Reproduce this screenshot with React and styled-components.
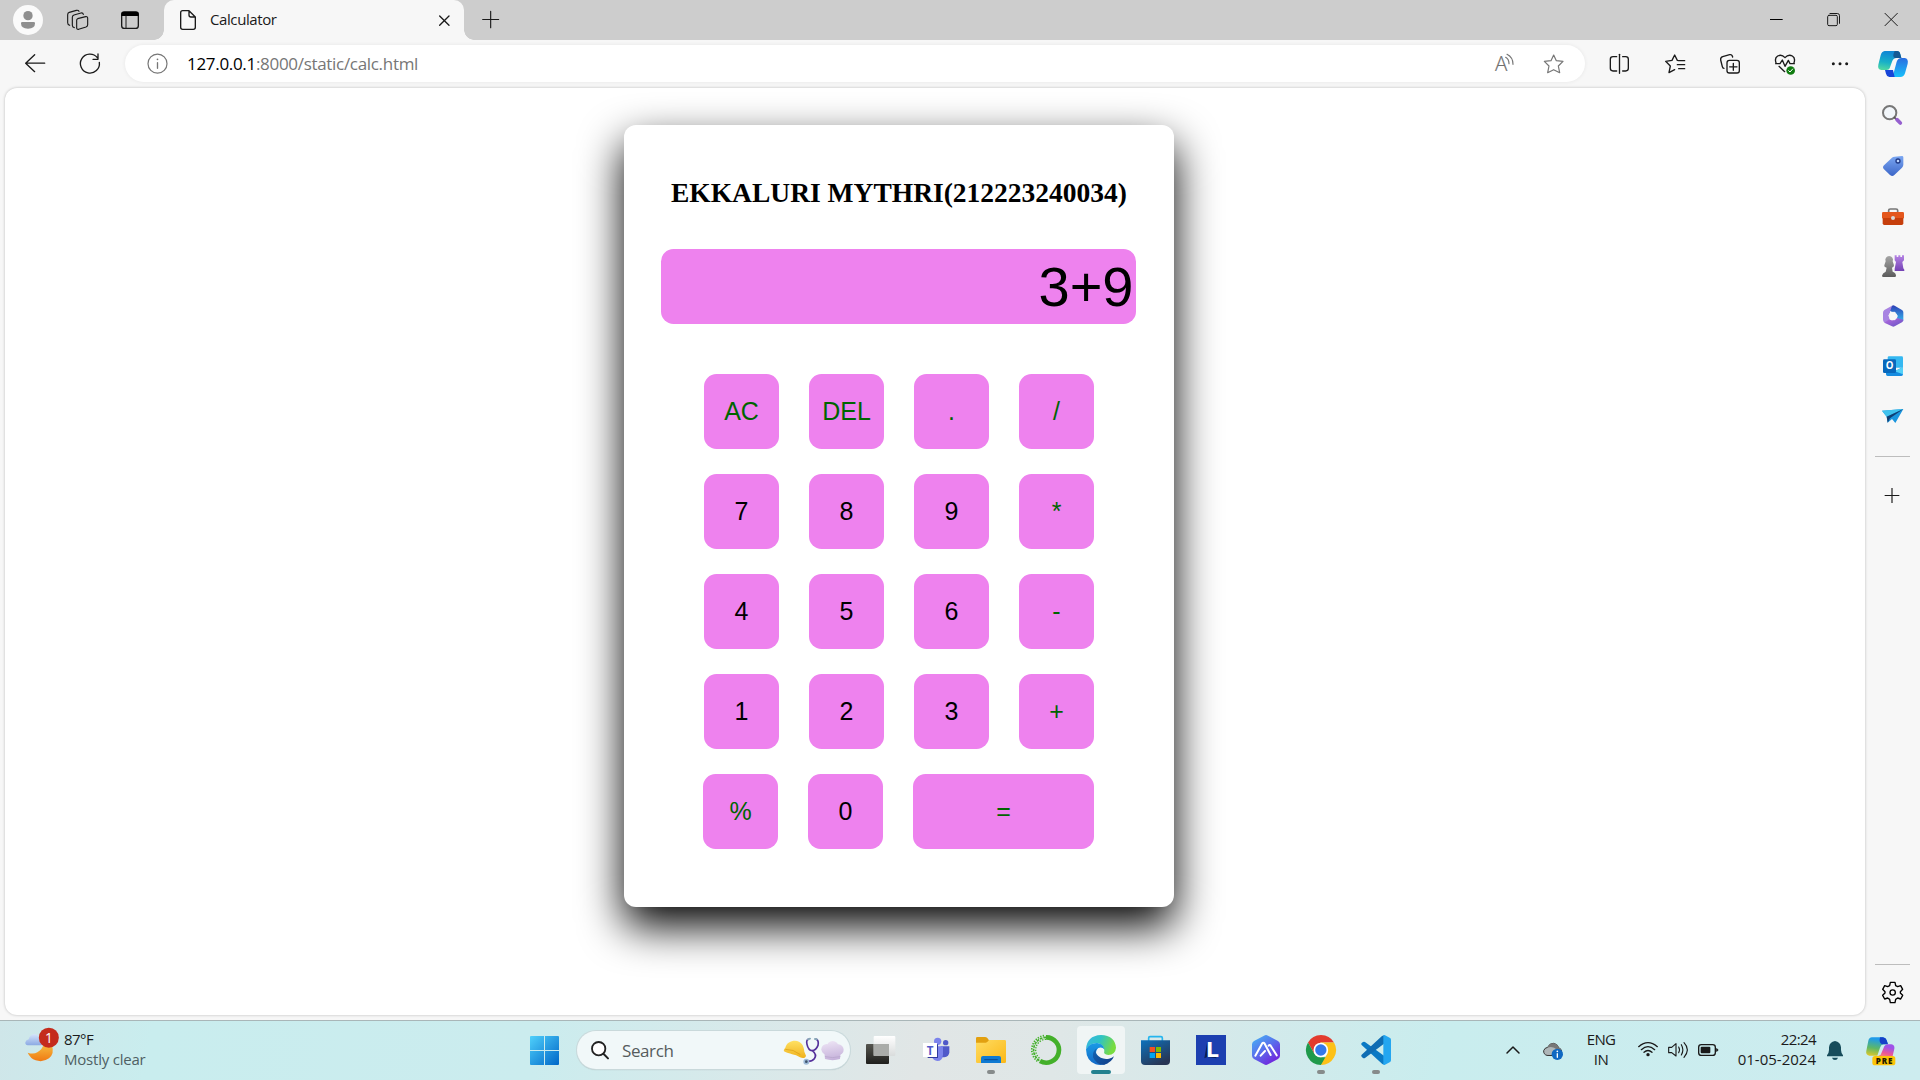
import React from "react";
import styled, { createGlobalStyle, css } from "styled-components";

const GlobalStyle = createGlobalStyle`
  * { box-sizing: border-box; }
  html, body { margin: 0; padding: 0; overflow: hidden; }
  body { font-family: "Open Sans", "Noto Sans", sans-serif; color: #1b1b1b; }
`;

const Screen = styled.div`
  width: 1920px;
  height: 1080px;
  display: flex;
  flex-direction: column;
  background: #f7f7f7;
  overflow: hidden;
`;

/* ---------- icons: artwork is drawn on a grid of three units per pixel ---------- */

const Svg = styled.svg`
  display: block;
  flex: none;
  fill: none;
  stroke-linecap: round;
  stroke-linejoin: round;
`;

const Glyph = ({ box, children, ...rest }) => (
  <Svg viewBox={box.join(" ")} width={box[2] / 3} height={box[3] / 3} {...rest}>
    {children}
  </Svg>
);

/* ---------- tab strip ---------- */

const TabStrip = styled.header`
  display: flex;
  height: 40px;
  flex: none;
  background: #cdcdcd;
`;

const Tab = styled.div`
  position: relative;
  display: flex;
  width: 300px;
  height: 40px;
  background: #f7f7f7;
  border-radius: 10px 10px 0 0;
  &::before, &::after {
    content: "";
    position: absolute;
    bottom: 0;
    width: 10px;
    height: 10px;
  }
  &::before { left: -10px; background: radial-gradient(circle at 0 0, transparent 9.5px, #f7f7f7 10px); }
  &::after { right: -10px; background: radial-gradient(circle at 100% 0, transparent 9.5px, #f7f7f7 10px); }
`;

const TabTitle = styled.span`
  flex: 1;
  font-size: 15px;
  line-height: 39px;
  letter-spacing: -0.4px;
  color: #1a1a1a;
`;

const WindowControls = styled.div`
  display: flex;
  margin-left: auto;
`;

/* ---------- toolbar ---------- */

const Toolbar = styled.div`
  display: flex;
  height: 48px;
  flex: none;
  background: #f7f7f7;
`;

const AddressBar = styled.div`
  display: flex;
  flex: 1;
  height: 37px;
  margin-top: 5px;
  border-radius: 19px;
  background: #fff;
  box-shadow: 0 0 4px rgba(0, 0, 0, 0.07);
`;

const Url = styled.span`
  flex: 1;
  font-size: 17px;
  line-height: 37px;
  letter-spacing: -0.31px;
  color: #767676;
  b { font-weight: 400; color: #000; }
`;

/* ---------- page ---------- */

const Body = styled.div`
  display: flex;
  height: 932px;
  flex: none;
`;

const Viewport = styled.main`
  width: 1860px;
  height: 927px;
  margin: 0 1px 0 5px;
  border-radius: 12px;
  background: #fff;
  box-shadow: 0 0 3px rgba(0, 0, 0, 0.25);
  overflow: hidden;
`;

const Calculator = styled.section`
  display: flex;
  flex-direction: column;
  align-items: flex-start;
  width: 550px;
  height: 782px;
  margin: 37px 0 0 619px;
  border-radius: 12px;
  background: #fff;
  box-shadow: 0 19px 44px #000;
`;

const Title = styled.h2`
  align-self: center;
  margin: 50px 0 0;
  height: 36px;
  font: 700 27.5px/36px "Liberation Serif", "Times New Roman", serif;
  white-space: nowrap;
  color: #000;
`;

const Display = styled.div`
  width: 475px;
  height: 75px;
  margin: 38px 0 0 37px;
  padding-right: 2.5px;
  border-radius: 12.5px;
  background: violet;
  color: #000;
  font: 56px/75px "Liberation Sans", Arial, sans-serif;
  text-align: right;
`;

const Keypad = styled.div`
  display: flex;
  flex-direction: column;
  align-items: flex-end;
  gap: 25px;
  width: 391px;
  margin: 50px 0 0 79px;
`;

const KeyRow = styled.div`
  display: flex;
  gap: 30px;
`;

const Key = styled.button`
  width: ${(p) => (p.$wide ? 181 : 75)}px;
  height: 75px;
  padding: 0;
  border: 0;
  border-radius: 12.5px;
  background: violet;
  color: ${(p) => (p.$operator ? "darkgreen" : "#000")};
  font: 25px/75px "Liberation Sans", Arial, sans-serif;
`;

const KEYS = [
  ["AC", "DEL", ".", "/"],
  ["7", "8", "9", "*"],
  ["4", "5", "6", "-"],
  ["1", "2", "3", "+"],
  ["%", "0", "="],
];

/* ---------- side bar ---------- */

const Sidebar = styled.aside`
  display: flex;
  flex-direction: column;
  width: 54px;
  height: 932px;
`;

const Rule = styled.div`
  width: 35px;
  height: 1px;
  margin: ${(p) => p.$top} 0 0 9px;
  background: #bdbdbd;
`;

/* ---------- task bar ---------- */

const Taskbar = styled.footer`
  display: flex;
  height: 60px;
  flex: none;
  box-shadow: inset 0 1px #a9b6b8;
  background: linear-gradient(100deg, #cfe6e9 0%, #c9edee 8%, #cbecee 28%, #d8e9ea 39%, #e1e6e6 48%, #dfe7e7 55%, #d2eaeb 66%, #c9edee 75%, #cdecef 100%);
`;

const Weather = styled.div`
  display: flex;
  width: 510px;
`;

const Lines = styled.div`
  display: flex;
  flex-direction: column;
  padding-top: 9px;
  width: ${(p) => p.$w};
  text-align: ${(p) => p.$align || "left"};
`;

const Line = styled.span`
  font-size: 15px;
  line-height: 20px;
  white-space: nowrap;
  letter-spacing: ${(p) => p.$track || "0"};
  ${(p) => p.$muted && css`color: #4f6063;`}
`;

const SearchBox = styled.div`
  display: flex;
  width: 273px;
  height: 38px;
  margin: 11px 3px 0 0;
  border-radius: 19px;
  background: #f1f8f9;
  box-shadow: 0 0 0 1px #c9d9db, 0 1px 1px #9fb0b2;
`;

const Placeholder = styled.span`
  flex: 1;
  font-size: 17px;
  line-height: 39px;
  letter-spacing: -0.4px;
  color: #565c5d;
`;

const TaskSlot = styled.div`
  display: flex;
  position: relative;
  width: 55px;
  height: 60px;
  ${(p) => p.$state && css`
    &::after {
      content: "";
      position: absolute;
      bottom: 6px;
      left: ${p.$state === "active" ? 18 : 24}px;
      width: ${p.$state === "active" ? 20 : 8}px;
      height: 4px;
      border-radius: 2px;
      background: ${p.$state === "active" ? "#23818f" : "#868b8b"};
    }
  `}
`;

const Tray = styled.div`
  display: flex;
  margin-left: auto;
`;

/* ---------- artwork ---------- */

const ink = { stroke: "#1a1a1a", strokeWidth: 4 };
const gray = { stroke: "#767676", strokeWidth: 3.6 };

const Grad = ({ id, from, mid, to, x2 = 0, y2 = 1 }) => (
  <linearGradient id={id} x1="0" y1="0" x2={x2} y2={y2}>
    <stop offset="0" stopColor={from} />
    {mid && <stop offset="0.5" stopColor={mid} />}
    <stop offset="1" stopColor={to} />
  </linearGradient>
);

const Star = (p) => (
  <path d="M281 165 L289 182 L309 184 L295 198 L299 218 L281 209 L263 218 L267 198 L253 184 L273 182 Z" {...p} />
);

const Tabs = () => (
  <TabStrip>
    <Glyph box={[0, 0, 159, 120]}>
      <circle cx="84" cy="60" r="45" fill="#fafafa" />
      <circle cx="84" cy="47" r="14" fill="#8f8f8f" />
      <path d="M63 70 Q63 66 67 66 H101 Q105 66 105 70 Q105 86 84 86 Q63 86 63 70 Z" fill="#8f8f8f" />
    </Glyph>
    <Glyph box={[159, 0, 162, 120]}>
      <g {...ink} strokeWidth="3.4">
        <path d="M233 56 L257 50 Q263 49 263 55 V74 Q263 79 258 81 L236 88 Q230 89 230 83 V61 Q230 57 233 56 Z" />
        <path d="M223 83 Q217 82 217 76 V52 Q217 47 222 45 L243 39 Q249 38 250 43" />
        <path d="M209 76 Q203 74 203 68 V44 Q203 39 208 37 L229 31 Q235 30 237 34" />
      </g>
    </Glyph>
    <Glyph box={[321, 0, 171, 120]}>
      <rect x="365" y="36" width="50" height="49" rx="8" {...ink} />
      <path d="M364 48 V42 Q364 35 371 35 H409 Q416 35 416 42 V48 Z" fill="#000" />
      <path d="M378 48 V84" {...ink} strokeWidth="3" />
    </Glyph>
    <Tab>
      <Glyph box={[492, 0, 138, 120]}>
        <path d="M548 32 H567 L586 51 V82 Q586 88 580 88 H548 Q542 88 542 82 V38 Q542 32 548 32 Z M567 32 V45 Q567 51 573 51 H586" {...ink} />
      </Glyph>
      <TabTitle>Calculator</TabTitle>
      <Glyph box={[1290, 0, 102, 120]}>
        <path d="M1319 48 L1347 76 M1347 48 L1319 76" {...ink} />
      </Glyph>
    </Tab>
    <Glyph box={[1392, 0, 168, 120]}>
      <path d="M1448 58.5 H1496 M1472 34 V83" {...ink} strokeWidth="3.4" />
    </Glyph>
    <WindowControls>
      <Glyph box={[864, 0, 171, 120]}>
        <path d="M930 58.5 H968" stroke="#000" strokeWidth="3" strokeLinecap="butt" />
      </Glyph>
      <Glyph box={[1035, 0, 171, 120]}>
        <rect x="1103" y="46" width="29" height="31" rx="4" {...ink} strokeWidth="3" />
        <path d="M1110 40.5 H1132 Q1138.500 40.500 1138.500 47 V70" {...ink} strokeWidth="3" />
      </Glyph>
      <Glyph box={[1206, 0, 174, 120]}>
        <path d="M1275 40 L1312 77 M1312 40 L1275 77" {...ink} strokeWidth="3" />
      </Glyph>
    </WindowControls>
  </TabStrip>
);

const Tools = () => (
  <Toolbar>
    <Glyph box={[0, 120, 171, 144]}>
      <path d="M77 189.500 H134 M104 164 L77 189.500 L104 215" {...ink} />
    </Glyph>
    <Glyph box={[171, 120, 204, 144]}>
      <path d="M298 187 A28.500 28.500 0 1 1 292 173 M294 162 V178 H279" {...ink} />
    </Glyph>
    <AddressBar>
      <Glyph box={[375, 135, 186, 111]}>
        <circle cx="472.500" cy="191" r="28.500" {...gray} />
        <path d="M472.500 188 V205" {...gray} strokeWidth="4" />
        <circle cx="472.500" cy="178" r="2.600" fill="#767676" />
      </Glyph>
      <Url><b>127.0.0.1</b>:8000/static/calc.html</Url>
      <Glyph box={[75, 135, 123, 111]}>
        <text x="105" y="212" fontSize="61" fontWeight="300" fill="#6f6f6f" stroke="#6f6f6f" strokeWidth="0.600" textLength="37" lengthAdjust="spacingAndGlyphs">A</text>
        <path d="M137 172 Q147 178 147 191 M141 163 Q159 172 159 193" {...gray} />
      </Glyph>
      <Glyph box={[198, 135, 177, 111]}>
        <Star {...gray} />
      </Glyph>
    </AddressBar>
    <Glyph box={[375, 120, 186, 144]}>
      <path d="M470 170 H459 Q451 170 451 178 V205 Q451 213 459 213 H470 M488 170 H497 Q505 170 505 178 V205 Q505 213 497 213 H488" {...ink} />
      <path d="M478.500 163 V220" {...ink} />
    </Glyph>
    <Glyph box={[561, 120, 168, 144]}>
      <path d="M656 182 L652 181 L644 165 L636 181 L617 184 L631 198 L627 218 L644 209 M657 182 H674 M652 194 H674 M656 206 H674" {...ink} />
    </Glyph>
    <Glyph box={[729, 120, 165, 144]}>
      <rect x="801" y="181" width="37" height="38" rx="7" {...ink} />
      <path d="M820 190 V211 M809 200.500 H831" {...ink} />
      <path d="M792 205 Q788 205 787 200 L782 180 Q781 172 788 170 L809 164 Q816 162 818 171" {...ink} />
    </Glyph>
    <Glyph box={[894, 120, 162, 144]}>
      <path d="M948 188 Q943 174 953 168 Q965 162 975 173 Q985 162 997 168 Q1007 174 1002 188" {...ink} />
      <path d="M947 191 H960 L967 180 L975 199 L985 181 L990 191 H1003 M957 199 L974 215" {...ink} />
      <circle cx="992" cy="211.500" r="13" fill="#107c10" />
      <path d="M986 212 L990 216 L998 207" stroke="#fff" strokeWidth="3" />
    </Glyph>
    <Glyph box={[1056, 120, 168, 144]}>
      <g fill="#1a1a1a">
        <circle cx="1120" cy="191.500" r="4.500" />
        <circle cx="1140" cy="191.500" r="4.500" />
        <circle cx="1160" cy="191.500" r="4.500" />
      </g>
    </Glyph>
    <Glyph box={[1224, 120, 156, 144]}>
      <defs>
        <Grad id="cpA" from="#1089d4" mid="#18b0c8" to="#5ce19a" x2={-0.2} />
        <Grad id="cpB" from="#2a6de0" to="#18c0fb" />
      </defs>
      <path d="M1274 153 H1310 Q1319 153 1321 163 L1324 174 H1310 Q1299 175 1296 185 L1289 205 Q1287 210 1280 210 H1264 Q1252 208 1255 194 L1262 166 Q1265 154 1274 153 Z" fill="url(#cpA)" />
      <path d="M1304 153 H1311 Q1319 153 1321 163 L1324 174 H1304 Q1296 170 1304 153 Z" fill="#145a94" />
      <path d="M1325 174 H1334 Q1346 176 1343 191 L1335 220 Q1332 231 1321 231 H1288 Q1298 230 1301 219 L1310 185 Q1313 175 1325 174 Z" fill="url(#cpB)" />
      <path d="M1275 210 H1299 L1304 231 H1288 Q1280 230 1278 221 Z" fill="#1745d8" />
    </Glyph>
  </Toolbar>
);

const Side = () => (
  <Sidebar>
    <Glyph box={[18, 24, 162, 156]}>
      <circle cx="89" cy="98" r="20" stroke="#777" strokeWidth="6" fill="#f2f6fa" />
      <path d="M103 112 L110 119" stroke="#555" strokeWidth="5" />
      <path d="M111 119 L121 129" stroke="#9660cf" strokeWidth="11" />
    </Glyph>
    <Glyph box={[18, 180, 162, 156]}>
      <defs><Grad id="tag" from="#7ba7f2" to="#3c66c8" /></defs>
      <path d="M104 230 L126 228 Q130 228 130 232 V254 Q130 259 126 263 L103 285 Q97 291 90 285 L72 268 Q66 262 72 256 L96 233 Q99 230 104 230 Z" fill="url(#tag)" />
      <circle cx="114" cy="243" r="6" fill="#b9d3ff" stroke="#213a86" strokeWidth="4" />
    </Glyph>
    <Glyph box={[18, 336, 162, 150]}>
      <path d="M86 398 V391 Q86 387 91 387 H108 Q113 387 113 391 V398" stroke="#777" strokeWidth="5" />
      <rect x="66" y="396" width="66" height="20" rx="4" fill="#e4571d" />
      <path d="M68 414 H130 V430 Q130 435 125 435 H73 Q68 435 68 430 Z" fill="#c63f0c" />
      <circle cx="99" cy="414" r="6" fill="#d9d9d9" />
    </Glyph>
    <Glyph box={[18, 486, 162, 150]}>
      <defs><Grad id="rook" from="#b583e4" to="#7442b4" /><Grad id="pawn" from="#a5a5a5" to="#5c5c5c" /></defs>
      <path d="M104 526 H110 V531 H115 V526 H121 V531 H126 V526 H132 V541 L127 546 L130 565 Q134 568 133 573 H104 V566 L108 546 L104 541 Z" fill="url(#rook)" />
      <path d="M77 544 A11.500 11.500 0 1 1 98 544 L102 556 Q102 562 96 563 L98 575 Q109 579 108 589 Q107 591 104 591 H70 Q66 591 66 587 Q67 579 77 575 L80 563 Q72 562 73 556 Z" fill="url(#pawn)" />
    </Glyph>
    <Glyph box={[18, 636, 162, 150]}>
      <defs><Grad id="m1" from="#2d3fb5" to="#35b5ee" /><Grad id="m2" from="#bb6be0" to="#6254c4" x2={1} /></defs>
      <path d="M96 677 Q100 675 104 677 L126 690 Q130 693 130 697 V722 Q119 727 112 719 L111 706 L97 697 L86 690 Z" fill="url(#m1)" />
      <path d="M96 677 L91 692 L88 708 V725 L75 729 L71 725 Q69 722 69 718 V698 Q69 693 73 690 Z" fill="#a883e2" />
      <path d="M73 728 L88 718 Q99 725 111 714 L130 719 Q130 724 126 727 L104 739 Q100 741 96 739 Z" fill="url(#m2)" />
      <path d="M93 697 H105 L112 708 L105 719 H93 L87 708 Z" fill="#f7f7f7" stroke="#f7f7f7" strokeWidth="3" />
    </Glyph>
    <Glyph box={[18, 786, 162, 147]}>
      <rect x="83" y="829" width="46" height="34" rx="4" fill="#35b8f1" />
      <rect x="83" y="844" width="24" height="18" fill="#0869b8" />
      <path d="M78 862 L104 874 L129 861 V883 Q129 888 124 888 H83 Q78 888 78 883 Z" fill="#168ce0" />
      <path d="M104 874 L129 861 V883 Z" fill="#54d1f8" />
      <rect x="69" y="838" width="39" height="41" rx="4" fill="#0868bc" />
      <text x="88.500" y="868" textAnchor="middle" fontSize="29" fontWeight="700" fill="#fff">O</text>
    </Glyph>
    <Glyph box={[18, 933, 162, 147]}>
      <path d="M66 992 L130 987 L106 1029 L96 1017 L83 1028 L80 1010 Z" fill="#1a95de" />
      <path d="M66 992 L130 987 L80 1010 Z" fill="#40c2ed" />
      <path d="M80 1010 L130 987 L90 1015 L83 1028 Z" fill="#103e72" />
    </Glyph>
    <Rule $top="16px" />
    <Glyph box={[18, 1131, 162, 180]}>
      <path d="M74 1246.500 H118 M96 1224 V1269" {...ink} strokeLinecap="butt" strokeWidth="3.500" />
    </Glyph>
    <Rule $top="447px" />
    <Glyph box={[198, 75, 162, 150]}>
      <path d="M271 127 H285 L287 137 L293 140 L302 137 L308 148 L301 155 V159 L308 166 L302 177 L293 174 L287 178 L285 188 H271 L269 178 L263 174 L254 177 L248 166 L255 159 V155 L248 148 L254 137 L263 140 L269 137 Z" {...ink} stroke="#000" />
      <circle cx="278" cy="157.500" r="8" {...ink} stroke="#000" />
    </Glyph>
  </Sidebar>
);

const Bottom = () => (
  <Taskbar>
    <Weather>
      <Glyph box={[0, 60, 192, 180]}>
        <defs>
          <Grad id="moon" from="#f6b83c" to="#f07a14" />
          <Grad id="cloud" from="#d5e4fb" to="#8ba9e3" />
        </defs>
        <path d="M83 158 Q100 164 112 157 Q126 149 130 136 L156 137 Q164 160 147 175 Q129 188 107 181 Q91 175 83 158 Z" fill="url(#moon)" />
        <path d="M83 136 Q75 135 76 127 Q78 119 86 118 Q90 103 103 102 Q116 103 119 117 Q129 125 124 136 Z" fill="url(#cloud)" />
        <circle cx="146.500" cy="113" r="30" fill="#c42b1c" />
        <text x="147" y="128" textAnchor="middle" fontSize="41" fill="#fff">1</text>
      </Glyph>
      <Lines>
        <Line $track="-0.55px">87°F</Line>
        <Line $muted $track="-0.22px">Mostly clear</Line>
      </Lines>
    </Weather>
    <Glyph box={[30, 15, 201, 180]}>
      <defs><linearGradient id="win" gradientUnits="userSpaceOnUse" x1="90" y1="63" x2="177" y2="150"><stop offset="0" stopColor="#4fd0fb" /><stop offset="1" stopColor="#0067c8" /></linearGradient></defs>
      <path d="M92 63 H132 V105 H90 V65 Z M135 63 H175 L177 65 V105 H135 Z M90 108 H132 V150 H92 L90 148 Z M135 108 H177 V148 L175 150 H135 Z" fill="url(#win)" />
    </Glyph>
    <SearchBox>
      <Glyph box={[231, 48, 135, 114]}>
        <circle cx="296" cy="101" r="20" stroke="#222" strokeWidth="5.500" fill="#fff" />
        <path d="M311 117 L324 130" stroke="#222" strokeWidth="6" />
      </Glyph>
      <Placeholder>Search</Placeholder>
      <Glyph box={[840, 48, 210, 114]}>
        <defs>
          <Grad id="hat" from="#ffe163" to="#efb21c" />
          <linearGradient id="chef" gradientUnits="userSpaceOnUse" x1="990" y1="78" x2="1000" y2="135">
            <stop offset="0" stopColor="#ece3f4" />
            <stop offset="1" stopColor="#c5b1da" />
          </linearGradient>
        </defs>
        <path d="M852 109 C850 103 854 101 856 98 C860 83 872 77 885 77 C903 78 912 91 913 110 L918 122 C917 130 908 131 900 127 C885 117 868 118 852 109 Z" fill="url(#hat)" />
        <path d="M857 103 Q880 102 900 118" stroke="#d99a12" strokeWidth="2" />
        <path d="M925 73 Q918 76 921 88 Q925 106 936 107 Q948 106 954 91 Q957 77 949 73 M937 107 Q952 119 943 131 Q936 140 921 139" stroke="#54309a" strokeWidth="5" />
        <path d="M924 73 L930 71 M950 73 L945 72" stroke="#87a6b7" strokeWidth="6" />
        <circle cx="919" cy="140" r="9" fill="#9ebbd8" />
        <circle cx="919" cy="140" r="4" fill="#3d536b" />
        <g fill="url(#chef)">
          <circle cx="980" cy="103" r="16" />
          <circle cx="998" cy="96" r="18" />
          <circle cx="1015" cy="104" r="16" />
          <path d="M973 110 H1022 L1020 132 Q998 139 975 132 Z" />
        </g>
        <path d="M976 125 Q998 131 1020 125" stroke="#b3a1c8" strokeWidth="2" />
      </Glyph>
    </SearchBox>
    <TaskSlot>
      <Glyph box={[1059, 15, 165, 180]}>
        <defs><Grad id="tvA" from="#55554f" to="#1f1f1d" /><Grad id="tvB" from="#fff" to="#d9dcdc" /></defs>
        <rect x="1098" y="87" width="69" height="60" rx="3" fill="url(#tvA)" />
        <rect x="1121" y="63" width="65" height="60" rx="3" fill="url(#tvB)" />
        <path d="M1121 87 H1167 V123 H1121 Z" fill="#aaaca9" />
      </Glyph>
    </TaskSlot>
    <TaskSlot>
      <Glyph box={[1224, 15, 165, 180]}>
        <circle cx="1313" cy="79" r="11" fill="#7b83eb" />
        <circle cx="1337" cy="83" r="8" fill="#5059c9" />
        <path d="M1322 94 H1348 V112 Q1347 126 1333 127 H1322 Z" fill="#5059c9" />
        <path d="M1296 94 H1329 V119 Q1327 138 1312 138 Q1300 137 1296 126 Z" fill="#7b83eb" />
        <path d="M1283 126 H1311 V88 H1314 V129 H1283 Z" fill="#2f3a9e" />
        <rect x="1269" y="84" width="42" height="42" fill="#fff" />
        <text x="1290.500" y="119" textAnchor="middle" fontSize="35" fontWeight="700" fill="#5059c9">T</text>
      </Glyph>
    </TaskSlot>
    <TaskSlot $state="open">
      <Glyph box={[69, 15, 165, 180]}>
        <defs><Grad id="fold" from="#ffdc62" to="#fbb817" x2={1} /></defs>
        <path d="M108 70 Q108 66 112 66 H135 Q139 66 142 69 L147 76 H194 V100 H108 Z" fill="#e2a010" />
        <path d="M108 83 H137 Q141 83 144 79 L147 75 H194 Q198 75 198 79 V140 Q198 144 194 144 H112 Q108 144 108 140 Z" fill="url(#fold)" />
        <path d="M123 144 V129 Q123 123 129 123 H177 Q183 123 183 129 V144 Z" fill="#0f7ad2" />
        <path d="M134 134 H172" stroke="#0a4a91" strokeWidth="3" />
      </Glyph>
    </TaskSlot>
    <TaskSlot>
      <Glyph box={[234, 15, 165, 180]}>
        <g stroke="#43b02a" strokeLinecap="butt">
          <path d="M318 67 A38 38 0 1 1 300 138" strokeWidth="14" />
          <path d="M318 67 A38 38 0 0 0 300 138" strokeWidth="5" strokeDasharray="8 3" />
          <path d="M318 73 A32 32 0 0 0 299 130" strokeWidth="4" strokeDasharray="4 4" />
          <path d="M312 62 A43 43 0 0 0 294 140" strokeWidth="5" strokeDasharray="4 4" />
        </g>
      </Glyph>
    </TaskSlot>
    <TaskSlot $state="active">
      <Glyph box={[399, 15, 165, 180]}>
        <defs>
          <Grad id="edA" from="#39b6e4" mid="#2fc3c4" to="#79dc3f" x2={1} y2={0.3} />
          <Grad id="edB" from="#1a9be6" to="#1268c6" />
          <Grad id="edC" from="#1066b6" to="#143c86" x2={1} />
        </defs>
        <rect x="411" y="33" width="144" height="144" rx="12" fill="#f0f5f5" />
        <path d="M438 103 Q440 62 483 60 Q525 62 528 98 Q526 119 505 120 Q489 119 493 108 Q493 88 472 84 Q451 83 438 103 Z" fill="url(#edA)" />
        <path d="M438 103 Q449 83 472 84 Q491 87 493 103 Q485 94 475 99 Q463 109 472 125 Q482 143 504 144 Q487 153 467 148 Q439 138 438 103 Z" fill="url(#edB)" />
        <path d="M472 100 Q463 109 470 118 Q483 135 507 131 Q516 129 522 124 Q515 143 493 149 Q470 151 459 127 Q456 107 472 100 Z" fill="url(#edC)" />
      </Glyph>
    </TaskSlot>
    <TaskSlot>
      <Glyph box={[564, 15, 165, 180]}>
        <defs><Grad id="store" from="#0d72bd" to="#283655" x2={0.6} /></defs>
        <path d="M626 80 V69 Q626 65 630 65 H663 Q667 65 667 69 V80" stroke="#25b5ee" strokeWidth="5" />
        <path d="M603 76 H690 V138 Q690 150 678 150 H615 Q603 150 603 138 Z" fill="url(#store)" />
        <path d="M629 96 H645 V111 H629 Z" fill="#f25022" />
        <path d="M648 96 H663 V111 H648 Z" fill="#7fba00" />
        <path d="M629 114 H645 V129 H629 Z" fill="#00a4ef" />
        <path d="M648 114 H663 V129 H648 Z" fill="#ffb900" />
      </Glyph>
    </TaskSlot>
    <TaskSlot>
      <Glyph box={[729, 15, 165, 180]}>
        <rect x="768" y="60" width="90" height="90" fill="#1c3fb0" />
        <path d="M802 79 L793 130 L802 126 L829 130 V126 H802 Z" fill="#0b1f55" />
        <text x="797" y="125" fontSize="65" fontWeight="700" fill="#fff" textLength="40" lengthAdjust="spacingAndGlyphs">L</text>
      </Glyph>
    </TaskSlot>
    <TaskSlot>
      <Glyph box={[894, 15, 165, 180]}>
        <defs><Grad id="hex" from="#45b8f4" mid="#5872ed" to="#7221dc" x2={0.7} /></defs>
        <path d="M972 62 Q978 58 984 62 L1014 78 Q1020 82 1020 88 V122 Q1020 128 1014 132 L984 148 Q978 152 972 148 L942 132 Q936 128 936 122 V88 Q936 82 942 78 Z" fill="url(#hex)" />
        <path d="M946 122 L966 86 Q970 80 974 86 L992 120 M962 122 L975 108 M986 92 Q989 88 992 92 L1010 121" stroke="#fff" strokeWidth="6" />
      </Glyph>
    </TaskSlot>
    <TaskSlot $state="open">
      <Glyph box={[1059, 15, 165, 180]}>
        <path d="M1104 82.500 A45 45 0 0 1 1182 82.500 H1142 L1123 116 Z" fill="#e33b2e" />
        <path d="M1104 82.500 L1123 116 Q1130 127 1142 127 H1161 L1143 150 A45 45 0 0 1 1104 82.500 Z" fill="#1f9a4b" />
        <path d="M1182 82.500 A45 45 0 0 1 1143 150 L1162 116 Q1167 95 1142 82.500 Z" fill="#fdc117" />
        <circle cx="1142.500" cy="105" r="22" fill="#fff" />
        <circle cx="1142.500" cy="105" r="17" fill="#3478ea" />
      </Glyph>
    </TaskSlot>
    <TaskSlot $state="open">
      <Glyph box={[1224, 15, 165, 180]}>
        <path d="M1265 90 Q1262 87 1265 84 L1269 81 Q1272 79 1275 81 L1334 124 V147 Q1329 149 1326 146 Z" fill="#0a79c4" />
        <path d="M1265 119 Q1262 122 1265 125 L1269 129 Q1272 131 1275 129 L1334 85 V62 Q1329 60 1326 63 Z" fill="#0f6db3" />
        <path d="M1330 61 Q1332 59 1335 61 L1349 68 Q1353 70 1353 74 V136 Q1353 140 1349 142 L1335 149 Q1332 151 1330 149 Z" fill="#24a6f0" />
      </Glyph>
    </TaskSlot>
    <Tray>
      <Glyph box={[60, 30, 90, 180]}>
        <path d="M81 129 L99 111 L117 129" {...ink} strokeWidth="4.500" />
      </Glyph>
      <Glyph box={[150, 30, 138, 180]}>
        <path d="M200 136 Q190 133 191 122 Q194 113 203 112 Q209 99 221 100 Q233 102 236 113 Q246 117 245 127 L242 136 Z" fill="#aeb6b8" stroke="#333" strokeWidth="3" />
        <path d="M202 113 Q219 107 231 119 L243 124 Q244 114 236 113 Q233 101 221 100 Q208 99 202 113 Z" fill="#777" />
        <circle cx="232" cy="133" r="17" fill="#0f68c2" />
        <path d="M232 131 V142" stroke="#fff" strokeWidth="4" />
        <circle cx="232" cy="124" r="2.600" fill="#fff" />
      </Glyph>
      <Lines $w="50px" $align="center">
        <Line $track="-0.7px">ENG</Line>
        <Line $track="-0.5px">IN</Line>
      </Lines>
      <Glyph box={[438, 30, 111, 180]}>
        <path d="M476 110 Q504 86 532 110 M484 119 Q504 101 524 119 M492 127 Q504 116 516 127" {...ink} />
        <circle cx="504" cy="134" r="5" fill="#1a1a1a" />
      </Glyph>
      <Glyph box={[549, 30, 87, 180]}>
        <path d="M566 112 H575 L588 101 V138 L575 128 H566 Z M596 111 Q601 119 596 128 M604 104 Q613 119 604 135 M612 98 Q632 119 612 142" {...ink} strokeWidth="3.400" />
      </Glyph>
      <Glyph box={[636, 30, 93, 180]}>
        <rect x="656" y="104" width="50" height="32" rx="8" {...ink} />
        <rect x="662" y="110" width="29" height="20" rx="3" fill="#1a1a1a" />
        <path d="M709 116 Q714 116 714 120 Q714 124 709 124 Z" fill="#1a1a1a" stroke="#1a1a1a" strokeWidth="2" />
      </Glyph>
      <Lines $w="93px" $align="right">
        <Line $track="-0.6px">22:24</Line>
        <Line $track="0px">01-05-2024</Line>
      </Lines>
      <Glyph box={[1008, 30, 120, 180]}>
        <path d="M1041 136 Q1047 128 1047 120 V112 Q1049 95 1065 93 Q1081 95 1083 112 V120 Q1083 128 1089 136 V139 H1041 Z M1056 143 H1074 Q1072 150 1065 150 Q1058 150 1056 143 Z" fill="#174c5b" />
      </Glyph>
      <Glyph box={[1128, 30, 192, 180]}>
        <defs>
          <Grad id="preA" from="#1f9bea" mid="#5eb866" to="#f4cb20" x2={-0.2} />
          <Grad id="preB" from="#a052e8" mid="#ec5795" to="#f9a05c" x2={-0.4} />
        </defs>
        <path d="M1176 82 H1209 Q1218 83 1220 91 L1224 103 H1210 Q1203 104 1200 113 L1192 137 H1168 Q1156 134 1159 122 L1165 92 Q1167 83 1176 82 Z" fill="url(#preA)" />
        <path d="M1200 82 H1209 Q1218 83 1220 91 L1224 103 H1206 Q1196 99 1200 82 Z" fill="#1640c8" />
        <path d="M1224 103 H1234 Q1245 105 1243 116 L1238 138 H1194 L1202 134 L1211 113 Q1214 104 1224 103 Z" fill="url(#preB)" />
        <rect x="1177" y="138" width="69" height="28" rx="8" fill="#fcc407" />
        <text x="1212" y="161" textAnchor="middle" fontSize="24" fontWeight="800" fill="#221b00" textLength="50">PRE</text>
      </Glyph>
    </Tray>
  </Taskbar>
);

export default function App() {
  return (
    <Screen>
      <GlobalStyle />
      <Tabs />
      <Tools />
      <Body>
        <Viewport>
          <Calculator>
            <Title>EKKALURI MYTHRI(212223240034)</Title>
            <Display>3+9</Display>
            <Keypad>
              {KEYS.map((row) => (
                <KeyRow key={row[0]}>
                  {row.map((label) => (
                    <Key key={label} $wide={label === "="} $operator={!/^\d$/.test(label)}>
                      {label}
                    </Key>
                  ))}
                </KeyRow>
              ))}
            </Keypad>
          </Calculator>
        </Viewport>
        <Side />
      </Body>
      <Bottom />
    </Screen>
  );
}
